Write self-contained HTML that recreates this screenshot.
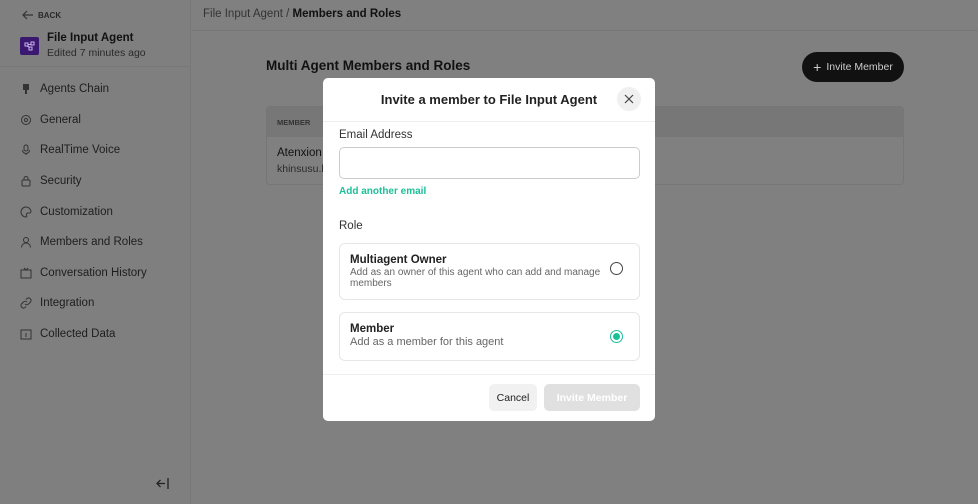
<!DOCTYPE html>
<html><head><style>
*{box-sizing:border-box;margin:0;padding:0}
body{width:978px;height:504px;background:#808080;font-family:"Liberation Sans",sans-serif;position:relative;overflow:hidden;color:#1a1a1a}
.sb{position:absolute;left:0;top:0;width:191px;height:504px;border-right:1px solid #777;background:#7f7f7f}
.back{position:absolute;left:22px;top:10px;font-size:8px;font-weight:bold;color:#2a2a2a;display:flex;align-items:center;gap:4px}
.logo{position:absolute;left:20px;top:37px;width:19px;height:18px;background:#3b1870;border-radius:2px}
.an{position:absolute;left:47px;top:32px;font-size:11.5px;font-weight:bold;color:#111}
.ed{position:absolute;left:47px;top:47px;font-size:10.5px;color:#2a2a2a}
.hr{position:absolute;left:0;top:66px;width:191px;border-top:1px solid #777}
.nav{position:absolute;left:20px;font-size:11.5px;color:#1e1e1e;display:flex;align-items:center;gap:8px}
.nav svg{width:12px;height:12px}
.top{position:absolute;left:192px;right:0;top:0;height:31px;border-bottom:1px solid #777}
.crumb{position:absolute;left:203px;top:8px;font-size:11.5px;color:#333}
.crumb b{color:#111}
h2{position:absolute;left:266px;top:58px;font-size:13.5px;color:#111}
.ib{position:absolute;left:802px;top:52px;width:102px;height:30px;background:#111;border-radius:15px;color:#ccc;font-size:10.5px;display:flex;align-items:center;justify-content:center;gap:5px}
.tbl{position:absolute;left:266px;top:106px;width:638px;height:79px;border:1px solid #767676;border-radius:4px;background:#808080}
.th{height:30px;background:#777;font-size:7.5px;font-weight:bold;color:#333;padding:11px 10px}
.tr1{position:absolute;left:10px;top:40px;font-size:11.5px;color:#111}
.tr2{position:absolute;left:10px;top:56px;font-size:10.5px;color:#2a2a2a}
.m{position:absolute;left:323px;top:78px;width:332px;height:343px;background:#fff;border-radius:5px}
.mt{position:absolute;left:0;width:100%;top:14px;text-align:center;font-size:13px;font-weight:bold;color:#222}
.x{position:absolute;left:294px;top:9px;width:24px;height:24px;border-radius:50%;background:#f0f0f0;display:flex;align-items:center;justify-content:center}
.l1{position:absolute;left:0;top:43px;width:100%;border-top:1px solid #eee}
.lab{position:absolute;left:16px;font-size:11.5px;color:#333}
.inp{position:absolute;left:16px;top:69px;width:301px;height:32px;border:1px solid #ccc;border-radius:5px}
.add{position:absolute;left:16px;top:108px;font-size:10px;font-weight:bold;color:#1bbf98}
.card{position:absolute;left:16px;width:301px;border:1px solid #e6e6e6;border-radius:6px}
.ct{position:absolute;left:10px;font-size:11.5px;font-weight:bold;color:#222}
.cd{position:absolute;left:10px;font-size:9.5px;color:#666;line-height:11px}
.rad{position:absolute;left:270px;width:13px;height:13px;border-radius:50%;border:1.3px solid #444}
.l2{position:absolute;left:0;top:296px;width:100%;border-top:1px solid #eee}
.btn{position:absolute;top:306px;height:27px;border-radius:5px;font-size:10.5px;display:flex;align-items:center;justify-content:center}
</style></head><body>
<div class="sb">
<div class="back"><svg width="12" height="10" viewBox="0 0 12 10"><path d="M11 5H1M5 1L1 5l4 4" stroke="#333" fill="none" stroke-width="1.2"/></svg>BACK</div>
<div class="logo"><svg width="19" height="18" viewBox="0 0 19 18"><g stroke="#c9b3ee" fill="none" stroke-width="1"><rect x="5" y="6" width="3" height="3"/><rect x="11" y="5" width="3" height="3"/><rect x="9" y="10" width="3" height="3"/><path d="M8 7.5h3M7 9l3 1.5"/></g></svg></div>
<div class="an">File Input Agent</div><div class="ed">Edited 7 minutes ago</div>
<div class="hr"></div>
<div class="nav" style="top:83px"><svg viewBox="0 0 12 12"><path d="M3 1h6v6H3zM5 7v4h2V7" fill="#333"/></svg>Agents Chain</div>
<div class="nav" style="top:114px"><svg viewBox="0 0 12 12"><circle cx="6" cy="6" r="4.5" stroke="#333" fill="none"/><circle cx="6" cy="6" r="1.6" stroke="#333" fill="none"/></svg>General</div>
<div class="nav" style="top:144px"><svg viewBox="0 0 12 12"><rect x="4" y="1" width="4" height="6" rx="2" stroke="#333" fill="none"/><path d="M2.5 6a3.5 3.5 0 007 0M6 9.5V11" stroke="#333" fill="none"/></svg>RealTime Voice</div>
<div class="nav" style="top:175px"><svg viewBox="0 0 12 12"><rect x="2" y="5" width="8" height="6" rx="1" stroke="#333" fill="none"/><path d="M4 5V3.5a2 2 0 014 0V5" stroke="#333" fill="none"/></svg>Security</div>
<div class="nav" style="top:206px"><svg viewBox="0 0 12 12"><path d="M6 1a5 5 0 100 10c1 0 1-1 .5-1.7S6.5 7 8 7h1.5A1.5 1.5 0 0011 5.5 5 5 0 006 1z" stroke="#333" fill="none"/></svg>Customization</div>
<div class="nav" style="top:236px"><svg viewBox="0 0 12 12"><circle cx="6" cy="4" r="2.5" stroke="#333" fill="none"/><path d="M1.5 11.5a4.5 4.5 0 019 0" stroke="#333" fill="none"/></svg>Members and Roles</div>
<div class="nav" style="top:267px"><svg viewBox="0 0 12 12"><rect x="1" y="3" width="10" height="8" stroke="#333" fill="none"/><path d="M4 1l2 2 2-2" stroke="#333" fill="none"/></svg>Conversation History</div>
<div class="nav" style="top:297px"><svg viewBox="0 0 12 12"><path d="M5 7a2.5 2.5 0 003.5 0l2-2A2.5 2.5 0 007 1.5L6 2.5M7 5a2.5 2.5 0 00-3.5 0l-2 2A2.5 2.5 0 005 10.5l1-1" stroke="#333" fill="none"/></svg>Integration</div>
<div class="nav" style="top:328px"><svg viewBox="0 0 12 12"><rect x="1" y="2" width="10" height="9" stroke="#333" fill="none"/><path d="M6 5v4" stroke="#333"/></svg>Collected Data</div>
<svg style="position:absolute;left:156px;top:478px" width="14" height="11" viewBox="0 0 14 11"><path d="M12 0v11M9 5.5H1M4.5 2L1 5.5 4.5 9" stroke="#222" fill="none" stroke-width="1.3"/></svg>
</div>
<div class="top"></div>
<div class="crumb">File Input Agent / <b>Members and Roles</b></div>
<h2>Multi Agent Members and Roles</h2>
<div class="ib"><span style="font-size:14px">+</span>Invite Member</div>
<div class="tbl"><div class="th">MEMBER</div><div class="tr1">Atenxion A</div><div class="tr2">khinsusu.l</div></div>
<div class="m">
<div class="mt">Invite a member to File Input Agent</div>
<div class="x"><svg width="10" height="10" viewBox="0 0 10 10"><path d="M1 1l8 8M9 1L1 9" stroke="#444" stroke-width="1.2"/></svg></div>
<div class="l1"></div>
<div class="lab" style="top:51px">Email Address</div>
<div class="inp"></div>
<div class="add">Add another email</div>
<div class="lab" style="top:142px">Role</div>
<div class="card" style="top:165px;height:57px"><div class="ct" style="top:10px">Multiagent Owner</div><div class="cd" style="top:23px;font-size:10px">Add as an owner of this agent who can add and manage<br>members</div><div class="rad" style="top:18px"></div></div>
<div class="card" style="top:234px;height:49px"><div class="ct" style="top:10px">Member</div><div class="cd" style="top:24px;font-size:11px">Add as a member for this agent</div><div class="rad" style="top:17px;border-color:#1bbf98;border-width:1.5px;display:flex;align-items:center;justify-content:center"><div style="width:7px;height:7px;border-radius:50%;background:#1bbf98"></div></div></div>
<div class="l2"></div>
<div class="btn" style="left:166px;width:48px;background:#f1f1f1;color:#222">Cancel</div>
<div class="btn" style="left:221px;width:96px;background:#e0e0e0;color:#fff;font-weight:bold">Invite Member</div>
</div>
</body></html>
